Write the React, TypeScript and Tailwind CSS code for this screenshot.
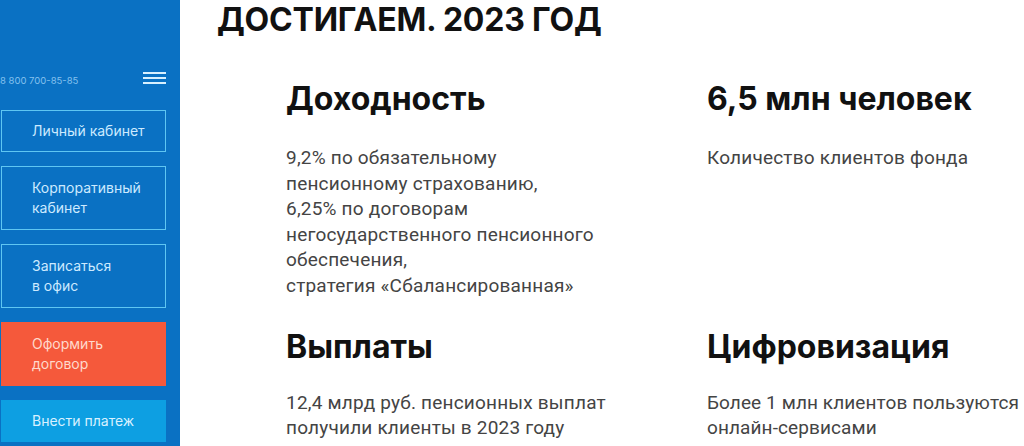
import React from "react";

const head = { fontFamily: "Inter, 'Noto Sans', sans-serif" };
const body = { fontFamily: "Roboto, 'Noto Sans', sans-serif" };

function Btn({ children, kind }: { children: React.ReactNode; kind: "outline" | "orange" | "blue" }) {
  const cls =
    kind === "outline"
      ? "border border-[#5fc6f2] text-[#cdeaff]"
      : kind === "orange"
      ? "bg-[#f5593b] text-[#ffd9cc] border border-[#f5593b]"
      : "bg-[#0d9fe2] text-[#d8f1ff] border border-[#0d9fe2]";
  return (
    <div className={`ml-[1px] w-[165px] pl-[30px] pr-2 text-[14px] leading-[20px] ${cls}`} style={head}>
      {children}
    </div>
  );
}

export default function App() {
  return (
    <div className="flex h-[446px] w-[1024px] overflow-hidden bg-white">
      <aside className="flex w-[180px] shrink-0 flex-col bg-[#0a71c3]">
        <div className="mt-[70px] flex h-[16px] items-center justify-between pr-[14px]">
          <span className="pt-[6px] text-[9.5px] text-[#84c1ee]" style={head}>8 800 700-85-85</span>
          <div className="flex flex-col gap-[3px]">
            <span className="block h-[2px] w-[23px] bg-[#d8f0ff]" />
            <span className="block h-[2px] w-[23px] bg-[#d8f0ff]" />
            <span className="block h-[2px] w-[23px] bg-[#d8f0ff]" />
          </div>
        </div>
        <div className="mt-[24px] flex flex-col gap-[14px]">
          <Btn kind="outline">
            <div className="py-[10px]">Личный кабинет</div>
          </Btn>
          <Btn kind="outline">
            <div className="py-[11px]">Корпоративный<br />кабинет</div>
          </Btn>
          <Btn kind="outline">
            <div className="py-[11px]">Записаться<br />в офис</div>
          </Btn>
          <Btn kind="orange">
            <div className="py-[11px]">Оформить<br />договор</div>
          </Btn>
          <Btn kind="blue">
            <div className="py-[10px]">Внести платеж</div>
          </Btn>
        </div>
      </aside>
      <main className="flex-1 pl-[37px]">
        <h1 className="mt-[-2px] text-[32px] font-bold leading-[44px] tracking-[-0.2px] text-[#111]" style={head}>
          ДОСТИГАЕМ. 2023 ГОД
        </h1>
        <div className="mt-[37px] grid grid-cols-[421px_1fr] pl-[69px]">
          <div>
            <h2 className="text-[32px] font-bold leading-[40px] text-[#111]" style={head}>Доходность</h2>
            <p className="mt-[26px] text-[19px] leading-[25.6px] tracking-[0.2px] text-[#444]" style={body}>
              9,2% по обязательному<br />
              пенсионному страхованию,<br />
              6,25% по договорам<br />
              негосударственного пенсионного<br />
              обеспечения,<br />
              стратегия «Сбалансированная»
            </p>
          </div>
          <div>
            <h2 className="text-[32px] font-bold leading-[40px] text-[#111]" style={head}>6,5 млн человек</h2>
            <p className="mt-[26px] text-[19px] leading-[25.6px] tracking-[0.2px] text-[#444]" style={body}>
              Количество клиентов фонда
            </p>
          </div>
          <div className="mt-[28px]">
            <h2 className="text-[32px] font-bold leading-[40px] text-[#111]" style={head}>Выплаты</h2>
            <p className="mt-[23px] text-[19px] leading-[25.6px] tracking-[0.2px] text-[#444]" style={body}>
              12,4 млрд руб. пенсионных выплат<br />
              получили клиенты в 2023 году
            </p>
          </div>
          <div className="mt-[28px]">
            <h2 className="text-[32px] font-bold leading-[40px] text-[#111]" style={head}>Цифровизация</h2>
            <p className="mt-[23px] text-[19px] leading-[25.6px] tracking-[0.1px] text-[#444]" style={body}>
              Более 1 млн клиентов пользуются<br />
              онлайн-сервисами
            </p>
          </div>
        </div>
      </main>
    </div>
  );
}
